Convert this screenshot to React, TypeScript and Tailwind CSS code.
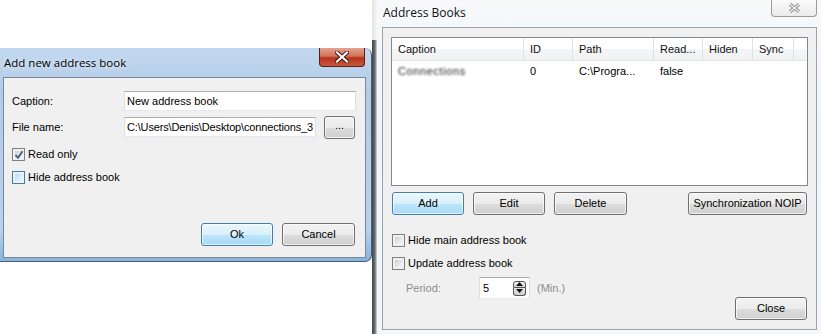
import clsx from 'clsx';
import type { ReactNode } from 'react';

const Btn = ({ children, def, className }: { children: ReactNode; def?: boolean; className?: string }) => (
  <div
    className={clsx(
      'h-[23px] flex items-center justify-center rounded-[3px] border text-black shadow-[inset_0_0_0_1px_rgba(255,255,255,0.7)]',
      def
        ? 'border-[#3c7fb1] bg-[linear-gradient(180deg,#eaf6fd_0%,#d9f0fc_50%,#bee6fd_50%,#a7d9f5_100%)]'
        : 'border-[#707070] bg-[linear-gradient(180deg,#f2f2f2_0%,#ebebeb_50%,#dddddd_50%,#cfcfcf_100%)]',
      className
    )}
  >
    {children}
  </div>
);

const Check = ({ checked, focus, label }: { checked?: boolean; focus?: boolean; label: string }) => (
  <div className="flex items-center gap-[3px] h-[14px]">
    <div
      className={clsx(
        'w-[13px] h-[13px] border p-[2px] relative',
        focus ? 'border-[#3c7fb1]' : 'border-[#7f8080]'
      )}
    >
      <div
        className={clsx(
          'w-full h-full',
          focus
            ? 'bg-[linear-gradient(135deg,#b9dff6,#eaf6fd)]'
            : 'bg-[linear-gradient(135deg,#cfcfcf,#f7f7f7)]'
        )}
      />
      {checked && (
        <svg className="absolute left-[1px] top-[1px]" width="10" height="10" viewBox="0 0 10 10">
          <path d="M1.5 5 L4 7.8 L8.6 1.2" fill="none" stroke="#3f5a8c" strokeWidth="1.8" />
        </svg>
      )}
    </div>
    <span>{label}</span>
  </div>
);

const Input = ({ value, className }: { value: string; className?: string }) => (
  <div
    className={clsx(
      'h-[20px] bg-white border border-[#abadb3] border-x-[#dbdfe6] border-b-[#e3e9ef] px-[2px] flex items-center overflow-hidden whitespace-nowrap',
      className
    )}
  >
    {value}
  </div>
);

const columns = [
  { name: 'Caption', w: 'w-[132px]' },
  { name: 'ID', w: 'w-[49px]' },
  { name: 'Path', w: 'w-[81px]' },
  { name: 'Read...', w: 'w-[49px]' },
  { name: 'Hiden', w: 'w-[50px]' },
  { name: 'Sync', w: 'w-[41px]' },
];

export default function App() {
  return (
    <div className="w-[821px] h-[334px] flex bg-white overflow-hidden font-['Liberation_Sans',Arial,sans-serif] text-[11px] text-black">
      {/* left side: add dialog */}
      <div className="w-[372px] flex flex-col shrink-0">
        <div className="h-[48px] bg-white" />
        <div className="h-[214px] rounded-r-[7px] border-r border-b border-[#4d5c6e] bg-[linear-gradient(180deg,#c2d8ef_0%,#b2cce8_20%,#b8d2ec_85%,#86b3dc_100%)] flex flex-col">
          <div className="h-[29px] flex items-start justify-between">
            <span className="pl-[4px] pt-[7px] font-['Open_Sans',sans-serif] text-[11.5px] leading-[16px] [text-shadow:0_0_6px_#fff]">
              Add new address book
            </span>
            <div className="mr-[6px] w-[46px] h-[19px] rounded-b-[4px] border border-t-0 border-[#5e1d14] bg-[linear-gradient(180deg,#e4a391_0%,#d0715b_45%,#b7321a_55%,#c85a3e_100%)] flex items-center justify-center">
              <svg width="14" height="12" viewBox="0 0 14 12">
                <path d="M2 1.5 L12 10.5 M12 1.5 L2 10.5" stroke="#3a1510" strokeWidth="4" strokeLinecap="square" />
                <path d="M2 1.5 L12 10.5 M12 1.5 L2 10.5" stroke="#fff" strokeWidth="2.2" strokeLinecap="square" />
              </svg>
            </div>
          </div>
          <div className="ml-[3px] mr-[5px] h-[181px] border border-[#7a8796] bg-[#f0f0f0] flex flex-col pl-[8px] pr-[9px] pt-[13px]">
            <div className="flex items-center h-[20px]">
              <span className="w-[112px]">Caption:</span>
              <Input value="New address book" className="w-[232px]" />
            </div>
            <div className="flex items-center h-[20px] mt-[6px]">
              <span className="w-[112px]">File name:</span>
              <Input value="C:\Users\Denis\Desktop\connections_3" className="w-[192px] tracking-[-0.15px]" />
              <Btn className="ml-[8px] w-[31px] h-[20px] text-[11px] pb-[3px]">...</Btn>
            </div>
            <div className="mt-[10px] flex flex-col gap-[9px]">
              <Check checked label="Read only" />
              <Check focus label="Hide address book" />
            </div>
            <div className="mt-[39px] flex justify-end gap-[9px] pr-[1px]">
              <Btn def className="w-[72px]">Ok</Btn>
              <Btn className="w-[73px]">Cancel</Btn>
            </div>
          </div>
        </div>
        <div className="flex-1 bg-white" />
      </div>

      {/* strip between windows */}
      <div className="w-[5px] shrink-0 flex flex-col">
        <div className="h-[40px] bg-[linear-gradient(90deg,#e2e2e2,#f6f6f6)]" />
        <div className="flex-1 bg-[linear-gradient(90deg,#3e4347,#6b7075_60%,#d8dde2)]" />
      </div>

      {/* right: address books dialog */}
      <div className="flex-1 flex flex-col bg-[linear-gradient(180deg,#f7f9fb_0%,#eef4f9_40%,#f3f7fb_100%)]">
        <div className="h-[27px] flex items-start justify-between">
          <span className="pl-[6px] pt-[5px] font-['Open_Sans',sans-serif] text-[12px] leading-[16px] text-[#111]">
            Address Books
          </span>
          <div className="mr-[4px] w-[46px] h-[17px] rounded-b-[4px] border border-t-0 border-[#9a9a9a] bg-[linear-gradient(180deg,#fbfbfb,#eaeaea)] flex items-center justify-center">
            <svg width="13" height="10" viewBox="0 0 13 10">
              <path d="M2 1.2 L11 8.8 M11 1.2 L2 8.8" stroke="#8a8a8a" strokeWidth="3.2" />
              <path d="M2 1.2 L11 8.8 M11 1.2 L2 8.8" stroke="#f4f4f4" strokeWidth="1.4" />
            </svg>
          </div>
        </div>
        <div className="ml-[5px] mr-[4px] h-[303px] border border-[#9aa3ad] bg-[#f0f0f0] flex flex-col px-[8px] pt-[9px]">
          {/* list view */}
          <div className="w-[417px] h-[149px] border border-[#828790] bg-white flex flex-col">
            <div className="h-[23px] flex bg-[linear-gradient(180deg,#ffffff_0%,#ffffff_50%,#f4f5f7_50%,#f1f2f4_100%)] border-b border-[#e5e5e5]">
              {columns.map((c) => (
                <div key={c.name} className={clsx(c.w, 'h-full border-r border-[#e0e0e0] flex items-center pl-[6px] text-[#111]')}>
                  {c.name}
                </div>
              ))}
              <div className="flex-1" />
            </div>
            <div className="h-[19px] flex items-center mt-[1px]">
              <div className="w-[132px] pl-[6px]">
                <span className="blur-[1px] text-[#222] tracking-[0.6px]">Connections</span>
              </div>
              <div className="w-[49px] pl-[6px]">0</div>
              <div className="w-[81px] pl-[6px]">C:\Progra...</div>
              <div className="w-[49px] pl-[6px]">false</div>
            </div>
          </div>

          <div className="mt-[6px] flex items-center">
            <Btn def className="ml-[1px] w-[72px]">Add</Btn>
            <Btn className="ml-[9px] w-[72px]">Edit</Btn>
            <Btn className="ml-[9px] w-[73px]">Delete</Btn>
            <Btn className="ml-auto mr-[1px] w-[119px]">Synchronization NOIP</Btn>
          </div>

          <div className="flex-1 flex justify-between">
            <div className="flex flex-col pt-[18px] pl-[1px]">
              <Check label="Hide main address book" />
              <div className="mt-[9px]">
                <Check label="Update address book" />
              </div>
              <div className="mt-[7px] flex items-center h-[22px] text-[#8d8d8d]">
                <span className="w-[87px] pl-[14px]">Period:</span>
                <div className="w-[51px] h-[22px] bg-white border border-[#abadb3] border-x-[#dbdfe6] border-b-[#e3e9ef] flex items-center pl-[3px] pr-[3px] text-black">
                  <span className="flex-1">5</span>
                  <div className="w-[13px] h-[15px] flex flex-col gap-0">
                    <div className="h-[7px] rounded-t-[3px] border border-[#555] bg-[linear-gradient(180deg,#f4f4f4,#d6d6d6)] flex items-center justify-center">
                      <svg width="7" height="4" viewBox="0 0 7 4"><path d="M0 4 L3.5 0 L7 4 Z" fill="#111" /></svg>
                    </div>
                    <div className="h-[8px] rounded-b-[3px] border border-t-0 border-[#555] bg-[linear-gradient(180deg,#e8e8e8,#cfcfcf)] flex items-center justify-center">
                      <svg width="7" height="4" viewBox="0 0 7 4"><path d="M0 0 L3.5 4 L7 0 Z" fill="#111" /></svg>
                    </div>
                  </div>
                </div>
                <span className="ml-[7px]">(Min.)</span>
              </div>
            </div>
            <div className="flex flex-col justify-end pb-[9px]">
              <Btn className="w-[72px] mr-[1px]">Close</Btn>
            </div>
          </div>
        </div>
        <div className="flex-1" />
      </div>
    </div>
  );
}
